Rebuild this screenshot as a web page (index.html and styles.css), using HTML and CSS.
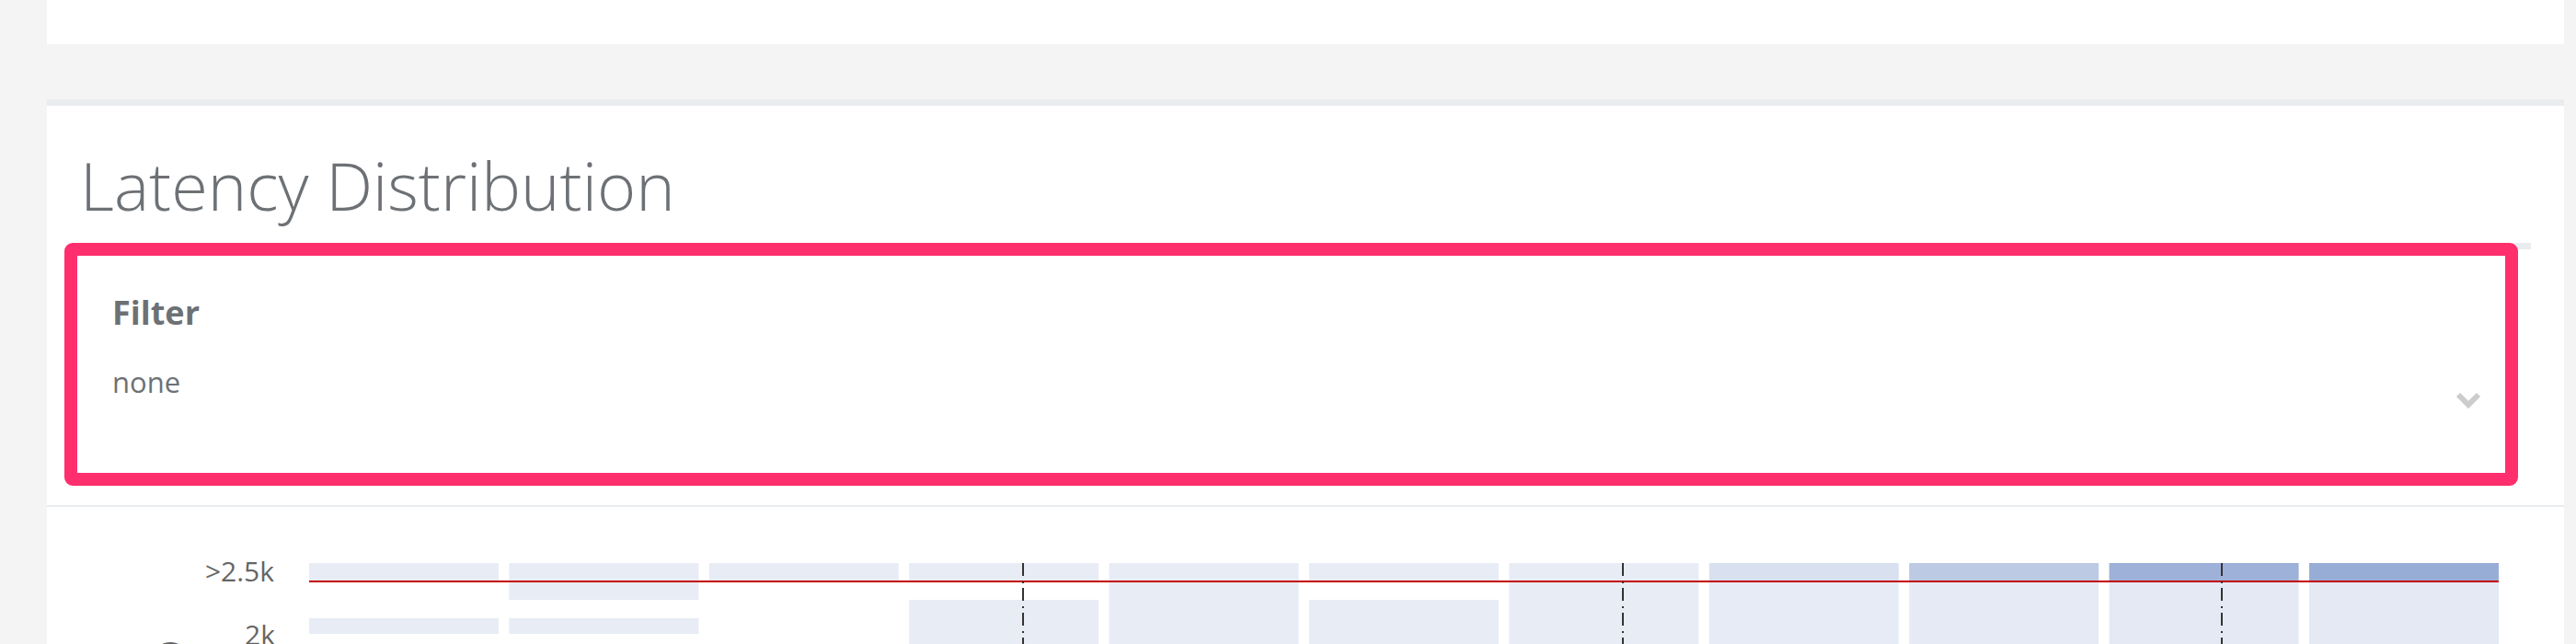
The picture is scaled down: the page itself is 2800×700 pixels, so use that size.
FILE: index.html
```html
<!DOCTYPE html>
<html lang="en">
<head>
<meta charset="utf-8">
<title>Latency Distribution</title>
<link rel="stylesheet" href="styles.css">
</head>
<body>
<div class="page">
  <div class="card card-prev"></div>
  <div class="card card-main">
    <div class="card-header">
      <h2 class="title">Latency Distribution</h2>
      <div class="filter">
        <div class="filter-label">Filter</div>
        <div class="select">
          <span class="select-value">none</span>
          <svg class="chevron" viewBox="0 0 28 19" aria-hidden="true">
            <polyline points="3,3 14,14 25,3" fill="none" stroke="#cccccc" stroke-width="6"/>
          </svg>
        </div>
        <div class="highlight"></div>
      </div>
    </div>
    <div class="card-body">
      <svg class="heatmap" width="2736" height="200" viewBox="0 0 2736 200">
        <g class="cells">
          <!-- col 1 -->
          <rect x="285" y="61" width="206" height="20" fill="#e8ecf5"/>
          <rect x="285" y="121" width="206" height="17" fill="#e8ecf5"/>
          <!-- col 2 -->
          <rect x="502.4" y="61" width="206" height="40" fill="#e8ecf5"/>
          <rect x="502.4" y="121" width="206" height="17" fill="#e8ecf5"/>
          <!-- col 3 -->
          <rect x="719.8" y="61" width="206" height="20" fill="#e8ecf5"/>
          <!-- col 4 -->
          <rect x="937.2" y="61" width="206" height="20" fill="#e8ecf5"/>
          <rect x="937.2" y="101" width="206" height="99" fill="#e8ecf5"/>
          <!-- col 5 -->
          <rect x="1154.6" y="61" width="206" height="139" fill="#e8ecf5"/>
          <!-- col 6 -->
          <rect x="1372" y="61" width="206" height="20" fill="#e8ecf5"/>
          <rect x="1372" y="101" width="206" height="99" fill="#e8ecf5"/>
          <!-- col 7 -->
          <rect x="1589.4" y="61" width="206" height="139" fill="#e8ecf5"/>
          <!-- col 8 -->
          <rect x="1806.8" y="61" width="206" height="20" fill="#d9e0ef"/>
          <rect x="1806.8" y="81" width="206" height="119" fill="#e7ebf5"/>
          <!-- col 9 -->
          <rect x="2024.2" y="61" width="206" height="20" fill="#bccae4"/>
          <rect x="2024.2" y="81" width="206" height="119" fill="#e6eaf4"/>
          <!-- col 10 -->
          <rect x="2241.6" y="61" width="206" height="20" fill="#9eb1d8"/>
          <rect x="2241.6" y="81" width="206" height="119" fill="#e5e9f4"/>
          <!-- col 11 -->
          <rect x="2459" y="61" width="206" height="20" fill="#98add6"/>
          <rect x="2459" y="81" width="206" height="119" fill="#e4e9f4"/>
        </g>
        <rect class="threshold" x="285" y="80" width="2380" height="2" fill="#c40000"/>
        <g class="markers" stroke="#333333" stroke-width="2" stroke-dasharray="14 6 2 5">
          <line x1="1061" y1="61" x2="1061" y2="200"/>
          <line x1="1713" y1="61" x2="1713" y2="200"/>
          <line x1="2364" y1="61" x2="2364" y2="200"/>
        </g>
        <g class="axis-labels">
          <text x="247" y="81" text-anchor="end">&gt;2.5k</text>
          <text x="248" y="150" text-anchor="end">2k</text>
          <text class="axis-title" transform="translate(142,146) rotate(-90)" text-anchor="end">Latency (ms)</text>
        </g>
      </svg>
    </div>
  </div>
</div>
</body>
</html>
```
FILE: styles.css
```css
html, body {
  margin: 0;
  padding: 0;
}

body {
  background: #f4f4f4;
  font-family: "Open Sans", "DejaVu Sans", sans-serif;
  overflow: hidden;
}

.page {
  padding: 0 13px 0 51px;
}

.card {
  background: #ffffff;
}

.card-prev {
  height: 48px;
}

.card-main {
  margin-top: 60px;
  border-top: 7px solid #e9ecef;
}

.card-header {
  padding: 42px 36px 21px 36px;
  border-bottom: 2px solid #e9ecef;
}

.title {
  margin: 0 0 19px 0;
  font-size: 72px;
  font-weight: 300;
  line-height: 88px;
  color: #6d7175;
}

.filter {
  position: relative;
  box-sizing: border-box;
  height: 264px;
  border-top: 7px solid #e9ecef;
  padding: 47px 54px 0 35px;
}

.filter-label {
  font-size: 36px;
  font-weight: 700;
  line-height: 43px;
  color: #6d7175;
}

.select {
  display: flex;
  justify-content: space-between;
  align-items: flex-start;
  margin-top: 32px;
}

.select-value {
  font-size: 31px;
  line-height: 45px;
  color: #6d7175;
}

.chevron {
  display: block;
  width: 28px;
  height: 19px;
  margin-top: 33px;
}

.highlight {
  position: absolute;
  left: -17px;
  top: -7px;
  width: 2667px;
  height: 264px;
  box-sizing: border-box;
  border: 14px solid #ff2e6c;
  border-radius: 9px;
}

.card-body {
  height: 200px;
}

.heatmap {
  display: block;
}

.axis-labels text {
  font-family: "Open Sans", "DejaVu Sans", sans-serif;
  font-size: 30px;
  fill: #666666;
}

.axis-labels .axis-title {
  font-size: 28px;
}
```
